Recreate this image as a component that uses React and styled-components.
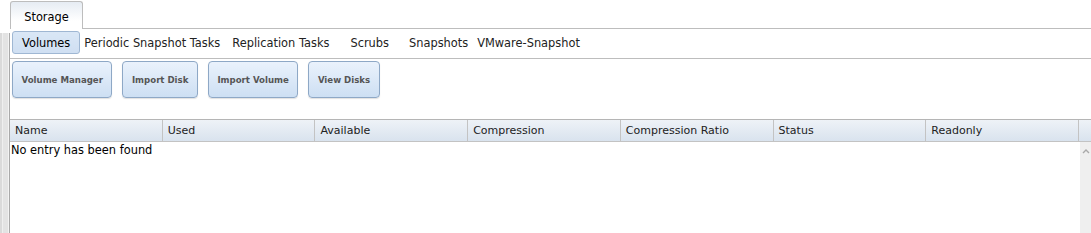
import React from 'react';
import styled, { createGlobalStyle } from 'styled-components';

const GlobalStyle = createGlobalStyle`
  html, body {
    margin: 0;
    padding: 0;
    background: #fff;
  }
  body {
    font-family: "DejaVu Sans", Verdana, sans-serif;
    font-size: 11.4px;
    color: #000;
  }
`;

const subTabs = [
  { label: 'Volumes', active: true, ml: 2 },
  { label: 'Periodic Snapshot Tasks', ml: -1 },
  { label: 'Replication Tasks', ml: 2 },
  { label: 'Scrubs', ml: 11 },
  { label: 'Snapshots', ml: 10 },
  { label: 'VMware-Snapshot', ml: -1 },
];

const buttons = ['Volume Manager', 'Import Disk', 'Import Volume', 'View Disks'];

const columns = ['Name', 'Used', 'Available', 'Compression', 'Compression Ratio', 'Status', 'Readonly'];

const App = () => {
  return (
    <Page>
      <GlobalStyle />
      <SideStrip />
      <Main>
        <TabBar>
          <Tab>Storage</Tab>
        </TabBar>

        <SubTabBar>
          {subTabs.map((t) => (
            <SubTab key={t.label} $active={t.active} $ml={t.ml}>
              {t.label}
            </SubTab>
          ))}
        </SubTabBar>

        <Toolbar>
          {buttons.map((b) => (
            <ActionButton key={b}>{b}</ActionButton>
          ))}
        </Toolbar>

        <Grid>
          <HeaderRow>
            {columns.map((c) => (
              <HeaderCell key={c}>{c}</HeaderCell>
            ))}
            <HeaderCell $filler />
          </HeaderRow>
          <Body>
            <BodyContent>No entry has been found</BodyContent>
            <Scrollbar>
              <svg width="8" height="6" viewBox="0 0 8 6">
                <path d="M1 5 L4 2 L7 5" fill="none" stroke="#a9a9a9" strokeWidth="1.4" />
              </svg>
            </Scrollbar>
          </Body>
        </Grid>
      </Main>
    </Page>
  );
};

const Page = styled.div`
  display: flex;
  width: 1091px;
  height: 233px;
  overflow: hidden;
`;

const SideStrip = styled.div`
  width: 9px;
  margin-top: 33px;
  flex-shrink: 0;
  background: linear-gradient(
    to right,
    #dadada 0 2px,
    #efefef 2px 3px,
    #e3e3e3 3px 8px,
    #f3f3f3 8px 9px
  );
  border-right: 1px solid #a9a9a9;
`;

const Main = styled.div`
  flex: 1;
  display: flex;
  flex-direction: column;
  min-width: 0;
`;

const TabBar = styled.div`
  box-sizing: border-box;
  height: 29px;
  display: flex;
  align-items: flex-end;
  border-bottom: 1px solid #bdbdbd;
`;

const Tab = styled.div`
  box-sizing: border-box;
  width: 73px;
  height: 28px;
  margin-bottom: -1px;
  border: 1px solid #bdbdbd;
  border-bottom: none;
  border-radius: 3px 3px 0 0;
  background: linear-gradient(#e6ecf3, #ffffff 70%);
  display: flex;
  align-items: center;
  justify-content: center;
  padding-top: 2px;
  color: #000;
`;

const SubTabBar = styled.div`
  box-sizing: border-box;
  height: 30px;
  display: flex;
  align-items: flex-start;
  padding-top: 2px;
  border-bottom: 1px solid #bdbdbd;
`;

const SubTab = styled.div`
  box-sizing: border-box;
  height: 23px;
  margin-left: ${(p) => p.$ml}px;
  padding: 0 ${(p) => (p.$active ? '9px' : '4px')};
  display: flex;
  align-items: center;
  border: 1px solid ${(p) => (p.$active ? '#9fb7d3' : 'transparent')};
  border-radius: 3px;
  background: ${(p) => (p.$active ? 'linear-gradient(#dae7f6, #cfdff2)' : 'transparent')};
  color: ${(p) => (p.$active ? '#000' : '#222')};
  white-space: nowrap;
`;

const Toolbar = styled.div`
  box-sizing: border-box;
  height: 60px;
  display: flex;
  align-items: flex-start;
  gap: 10px;
  padding: 2px 0 0 2px;
`;

const ActionButton = styled.button`
  box-sizing: border-box;
  height: 37px;
  padding: 0 8.5px;
  font-family: "DejaVu Sans", Verdana, sans-serif;
  font-size: 8.6px;
  font-weight: bold;
  color: #555;
  border: 1px solid #8ea8c6;
  border-radius: 4px;
  background: linear-gradient(#eaf2fc, #cddff3);
  box-shadow: 0 1px 1px rgba(0, 0, 0, 0.12);
  white-space: nowrap;
`;

const Grid = styled.div`
  flex: 1;
  display: flex;
  flex-direction: column;
  border-top: 1px solid #b5b5b5;
`;

const HeaderRow = styled.div`
  display: grid;
  grid-template-columns: repeat(7, 1fr) 12px;
  height: 22px;
  box-sizing: border-box;
  border-bottom: 1px solid #c3c3c3;
  background: linear-gradient(#eef2f7, #d9e3ee);
`;

const HeaderCell = styled.div`
  box-sizing: border-box;
  padding-left: ${(p) => (p.$filler ? 0 : 5)}px;
  border-right: ${(p) => (p.$filler ? 'none' : '1px solid #c3c3c3')};
  display: flex;
  align-items: center;
  font-size: 11px;
  color: #222;
  white-space: nowrap;
  overflow: hidden;
`;

const Body = styled.div`
  flex: 1;
  display: flex;
`;

const BodyContent = styled.div`
  flex: 1;
  padding: 1px 0 0 1px;
  line-height: 15px;
  color: #000;
`;

const Scrollbar = styled.div`
  width: 11px;
  background: #efefef;
  display: flex;
  justify-content: center;
  padding-top: 6px;
  box-sizing: border-box;
`;

export default App;
